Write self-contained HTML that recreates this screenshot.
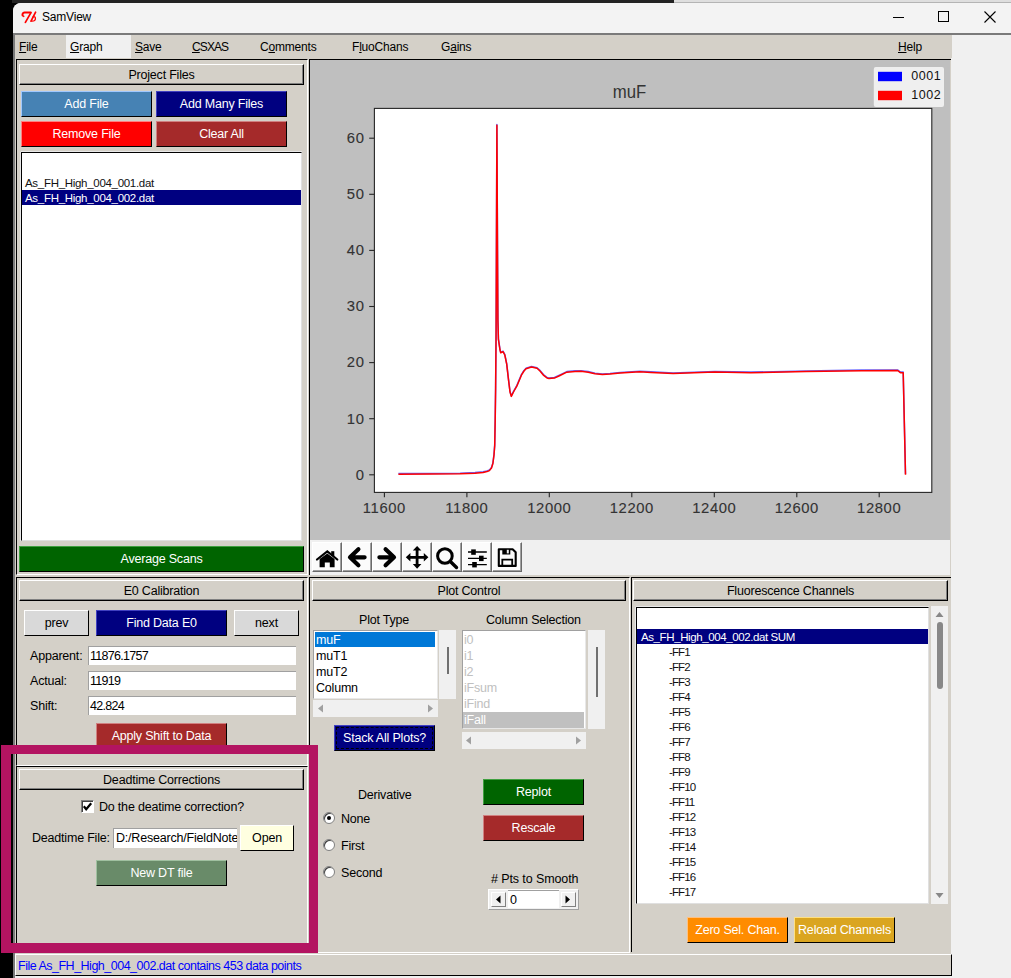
<!DOCTYPE html>
<html><head><meta charset="utf-8">
<style>
*{box-sizing:border-box;margin:0;padding:0}
html,body{width:1011px;height:978px;overflow:hidden;background:#000}
body{position:relative;font-family:"Liberation Sans",sans-serif;font-size:12px;color:#000}
.a{position:absolute}
.t{position:absolute;white-space:nowrap;line-height:1;letter-spacing:-0.2px}
.hdr{position:absolute;background:#d4d0c8;border-top:1px solid #fff;border-left:1px solid #fff;border-right:1px solid #000;border-bottom:1px solid #000;box-shadow:inset -1px -1px 0 #808080;text-align:center;font-size:12.5px;letter-spacing:-0.2px;padding-top:1px}
.btn{position:absolute;text-align:center;color:#fff;font-size:12.5px;letter-spacing:-0.2px;white-space:nowrap;border-right:1px solid #000;border-bottom:1px solid #000}
.ent{position:absolute;background:#fff;border-top:1px solid #a0a0a0;border-left:1px solid #a0a0a0}
.ul{text-decoration:underline}
</style></head><body>
<!-- top dark strip -->
<div class="a" style="left:12px;top:0;width:999px;height:3px;background:#dedede"></div><div class="a" style="left:12px;top:0;width:662px;height:3px;background:#222"></div><div class="a" style="left:674px;top:2px;width:337px;height:1px;background:#b4b4b4"></div>
<!-- window -->
<div class="a" id="win" style="left:13px;top:3px;width:998px;height:975px;background:#f0f0f0;border-radius:8px 0 0 0;overflow:hidden">
</div>
<!-- title bar -->
<div class="a" style="left:13px;top:3px;width:998px;height:30px;background:#f3f3f3;border-radius:8px 0 0 0"></div>
<div class="t" style="left:42px;top:11px;font-size:12px;color:#000">SamView</div>
<svg class="a" style="left:0;top:0" width="40" height="30" viewBox="0 0 40 30">
 <g fill="none" stroke="#f00" stroke-linecap="round">
  <path d="M22.6 15.5 Q22 13 24.5 12.6 L30.8 12.6" stroke-width="2"/>
  <path d="M23.5 16.2 L23.8 16.4" stroke-width="1.4"/>
  <path d="M30.8 12.8 L25.4 22.4" stroke-width="1.7"/>
  <path d="M35.6 12.2 L31 21.2" stroke-width="1.7"/>
  <path d="M33.2 16.6 Q35.6 16.4 35.4 18.6 Q35.5 21.2 32 21.2" stroke-width="1.3"/>
 </g>
</svg>
<!-- window controls -->
<div class="a" style="left:893px;top:17px;width:11px;height:1px;background:#000"></div>
<div class="a" style="left:938px;top:11px;width:11px;height:11px;border:1px solid #000"></div>
<svg class="a" style="left:984px;top:11px" width="12" height="12"><path d="M0.5 0.5 L11.5 11.5 M11.5 0.5 L0.5 11.5" stroke="#000" stroke-width="1.1"/></svg>
<!-- window border line -->
<div class="a" style="left:13px;top:33px;width:998px;height:2px;background:#7a7a7a"></div>
<div class="a" style="left:13px;top:33px;width:2px;height:945px;background:#7a7a7a"></div>
<!-- menubar -->
<div class="a" style="left:15px;top:35px;width:937px;height:23px;background:#d4d0c8"></div>
<div class="a" style="left:66px;top:35px;width:65px;height:23px;background:#f0f0f0"></div>
<div class="t" style="left:19px;top:41px"><span class="ul">F</span>ile</div>
<div class="t" style="left:70px;top:41px"><span class="ul">G</span>raph</div>
<div class="t" style="left:135px;top:41px"><span class="ul">S</span>ave</div>
<div class="t" style="left:192px;top:41px;letter-spacing:-0.9px"><span class="ul">C</span>SXAS</div>
<div class="t" style="left:260px;top:41px">C<span class="ul">o</span>mments</div>
<div class="t" style="left:352px;top:41px">F<span class="ul">l</span>uoChans</div>
<div class="t" style="left:441px;top:41px">G<span class="ul">a</span>ins</div>
<div class="t" style="left:898px;top:41px"><span class="ul">H</span>elp</div>
<!-- main bg -->
<div class="a" style="left:15px;top:58px;width:936px;height:920px;background:#d4d0c8"></div>

<!-- ===== Project Files frame ===== -->
<div class="a" style="left:16px;top:59px;width:292px;height:516px;border-top:1px solid #000;border-left:1px solid #000;border-right:1px solid #fff;border-bottom:1px solid #fff"></div>
<div class="hdr" style="left:19px;top:64px;width:285px;height:21px;line-height:19px">Project Files</div>
<div class="btn" style="left:21px;top:91px;width:131px;height:26px;line-height:25px;background:#4682b4;border-top:1px solid #a0c8ff;border-left:1px solid #a0c8ff">Add File</div>
<div class="btn" style="left:156px;top:91px;width:131px;height:26px;line-height:25px;background:#000080;border-top:1px solid #4040c0;border-left:1px solid #4040c0">Add Many Files</div>
<div class="btn" style="left:21px;top:121px;width:131px;height:26px;line-height:25px;background:#f00;border-top:1px solid #ff8080;border-left:1px solid #ff8080">Remove File</div>
<div class="btn" style="left:156px;top:121px;width:131px;height:26px;line-height:25px;background:#a52a2a;border-top:1px solid #d08080;border-left:1px solid #d08080">Clear All</div>
<div class="a" style="left:21px;top:152px;width:281px;height:389px;background:#fff;border-top:1px solid #000;border-left:1px solid #000;box-shadow:0 -1px 0 #e8e8e8, -1px 0 0 #e8e8e8;border-right:1px solid #e0e0e0;border-bottom:1px solid #e0e0e0"></div>
<div class="t" style="left:25px;top:177.5px;font-size:11.5px;letter-spacing:-0.3px;color:#111">As_FH_High_004_001.dat</div>
<div class="a" style="left:22px;top:190px;width:279px;height:15px;background:#000080"></div>
<div class="t" style="left:25px;top:192.5px;font-size:11.5px;letter-spacing:-0.3px;color:#fff">As_FH_High_004_002.dat</div>
<div class="btn" style="left:19px;top:546px;width:285px;height:26px;line-height:25px;background:#006400;border-top:1px solid #40a040;border-left:1px solid #40a040">Average Scans</div>

<!-- ===== Plot frame ===== -->
<div class="a" style="left:309px;top:59px;width:642px;height:516px;border-top:1px solid #000;border-left:1px solid #000"></div>
<div class="a" style="left:310px;top:60px;width:640px;height:480px;background:#bfbfbf"></div>
<div class="a" style="left:310px;top:540px;width:640px;height:35px;background:#f0f0f0"></div>

<svg class="a" style="left:310px;top:60px" width="640" height="480" viewBox="310 60 640 480">
 <rect x="374.4" y="108.4" width="557.4" height="384" fill="#fff" stroke="#262626" stroke-width="1.1"/>
 <g stroke="#262626" stroke-width="1.1"><path d="M369.2 474.8 H374.4" /><path d="M369.2 418.7 H374.4" /><path d="M369.2 362.6 H374.4" /><path d="M369.2 306.5 H374.4" /><path d="M369.2 250.4 H374.4" /><path d="M369.2 194.3 H374.4" /><path d="M369.2 138.2 H374.4" /><path d="M384.4 492.4 V497.2" /><path d="M466.9 492.4 V497.2" /><path d="M549.3 492.4 V497.2" /><path d="M631.8 492.4 V497.2" /><path d="M714.3 492.4 V497.2" /><path d="M796.8 492.4 V497.2" /><path d="M879.2 492.4 V497.2" /></g>
 <g fill="#333" stroke="#333" stroke-width="0.12" font-family="Liberation Sans" font-size="14.8px" letter-spacing="0.6"><text x="364.5" y="479.6" text-anchor="end">0</text><text x="364.5" y="423.5" text-anchor="end">10</text><text x="364.5" y="367.4" text-anchor="end">20</text><text x="364.5" y="311.3" text-anchor="end">30</text><text x="364.5" y="255.2" text-anchor="end">40</text><text x="364.5" y="199.1" text-anchor="end">50</text><text x="364.5" y="143.0" text-anchor="end">60</text><text x="384.4" y="513.3" text-anchor="middle">11600</text><text x="466.9" y="513.3" text-anchor="middle">11800</text><text x="549.3" y="513.3" text-anchor="middle">12000</text><text x="631.8" y="513.3" text-anchor="middle">12200</text><text x="714.3" y="513.3" text-anchor="middle">12400</text><text x="796.8" y="513.3" text-anchor="middle">12600</text><text x="879.2" y="513.3" text-anchor="middle">12800</text></g>
 <text x="629.6" y="98.2" text-anchor="middle" fill="#333" font-family="Liberation Sans" font-size="18px" textLength="33.5" lengthAdjust="spacingAndGlyphs">muF</text>
 <path d="M398.4 474.2 L430.0 474.0 L460.0 473.8 L475.0 473.2 L483.1 472.4 L487.0 471.6 L489.4 470.6 L491.5 468.0 L492.9 463.5 L494.0 455.0 L494.7 445.7 L495.2 420.0 L495.6 390.0 L496.1 330.0 L496.9 125.2 L497.5 250.0 L497.9 320.0 L498.4 339.3 L500.0 350.0 L500.7 352.7 L503.0 351.7 L504.8 355.0 L506.7 364.2 L508.5 379.8 L510.0 392.0 L511.3 396.4 L513.5 392.0 L516.8 386.2 L521.4 375.2 L524.0 371.0 L526.0 368.8 L531.5 367.0 L537.0 368.3 L540.0 371.0 L543.7 375.4 L547.0 378.0 L549.0 378.6 L554.4 378.1 L560.0 375.5 L566.8 372.2 L575.0 371.4 L581.0 371.3 L588.2 372.2 L595.0 373.8 L602.4 374.5 L610.0 374.0 L620.2 373.1 L639.8 371.8 L651.0 372.4 L673.2 373.5 L714.8 372.1 L750.8 372.7 L806.2 371.6 L861.6 370.7 L897.6 370.5 L900.4 372.7 L903.2 372.7 L905.5 474.7" fill="none" stroke="#4040ff" stroke-width="1.5" stroke-linejoin="round" transform="translate(0,-0.6)" opacity="0.8"/>
 <path d="M398.4 474.2 L430.0 474.0 L460.0 473.8 L475.0 473.2 L483.1 472.4 L487.0 471.6 L489.4 470.6 L491.5 468.0 L492.9 463.5 L494.0 455.0 L494.7 445.7 L495.2 420.0 L495.6 390.0 L496.1 330.0 L496.9 125.2 L497.5 250.0 L497.9 320.0 L498.4 339.3 L500.0 350.0 L500.7 352.7 L503.0 351.7 L504.8 355.0 L506.7 364.2 L508.5 379.8 L510.0 392.0 L511.3 396.4 L513.5 392.0 L516.8 386.2 L521.4 375.2 L524.0 371.0 L526.0 368.8 L531.5 367.0 L537.0 368.3 L540.0 371.0 L543.7 375.4 L547.0 378.0 L549.0 378.6 L554.4 378.1 L560.0 375.5 L566.8 372.2 L575.0 371.4 L581.0 371.3 L588.2 372.2 L595.0 373.8 L602.4 374.5 L610.0 374.0 L620.2 373.1 L639.8 371.8 L651.0 372.4 L673.2 373.5 L714.8 372.1 L750.8 372.7 L806.2 371.6 L861.6 370.7 L897.6 370.5 L900.4 372.7 L903.2 372.7 L905.5 474.7" fill="none" stroke="#f00" stroke-width="1.5" stroke-linejoin="round"/>
 <rect x="873.8" y="66.9" width="70.2" height="40.1" rx="2" fill="#efefef"/>
 <rect x="878" y="71.8" width="24" height="9.4" fill="#0000ff"/>
 <rect x="878" y="90.8" width="24" height="9.4" fill="#ff0000"/>
 <text x="911.3" y="80" fill="#111" font-family="Liberation Sans" font-size="12.5px" letter-spacing="0.5">0001</text>
 <text x="911.3" y="99" fill="#111" font-family="Liberation Sans" font-size="12.5px" letter-spacing="0.5">1002</text>
</svg>
<div class="a" style="left:312px;top:542px;width:30px;height:30px;background:#fbfbfb;border-top:1px solid #fff;border-left:1px solid #fff;border-right:1px solid #6a6a6a;border-bottom:1px solid #6a6a6a;box-shadow:inset -1px -1px 0 #a0a0a0"></div><div class="a" style="left:342px;top:542px;width:30px;height:30px;background:#fbfbfb;border-top:1px solid #fff;border-left:1px solid #fff;border-right:1px solid #6a6a6a;border-bottom:1px solid #6a6a6a;box-shadow:inset -1px -1px 0 #a0a0a0"></div><div class="a" style="left:372px;top:542px;width:30px;height:30px;background:#fbfbfb;border-top:1px solid #fff;border-left:1px solid #fff;border-right:1px solid #6a6a6a;border-bottom:1px solid #6a6a6a;box-shadow:inset -1px -1px 0 #a0a0a0"></div><div class="a" style="left:402px;top:542px;width:30px;height:30px;background:#fbfbfb;border-top:1px solid #fff;border-left:1px solid #fff;border-right:1px solid #6a6a6a;border-bottom:1px solid #6a6a6a;box-shadow:inset -1px -1px 0 #a0a0a0"></div><div class="a" style="left:432px;top:542px;width:30px;height:30px;background:#fbfbfb;border-top:1px solid #fff;border-left:1px solid #fff;border-right:1px solid #6a6a6a;border-bottom:1px solid #6a6a6a;box-shadow:inset -1px -1px 0 #a0a0a0"></div><div class="a" style="left:462px;top:542px;width:30px;height:30px;background:#fbfbfb;border-top:1px solid #fff;border-left:1px solid #fff;border-right:1px solid #6a6a6a;border-bottom:1px solid #6a6a6a;box-shadow:inset -1px -1px 0 #a0a0a0"></div><div class="a" style="left:492px;top:542px;width:30px;height:30px;background:#fbfbfb;border-top:1px solid #fff;border-left:1px solid #fff;border-right:1px solid #6a6a6a;border-bottom:1px solid #6a6a6a;box-shadow:inset -1px -1px 0 #a0a0a0"></div>
<svg class="a" style="left:310px;top:540px" width="215" height="35" viewBox="310 540 215 35">
 <g fill="#000" stroke="#000">
  <path d="M317 559.5 L327.3 551.4 L337.3 559.5" fill="none" stroke-width="2.2" stroke-linecap="round" stroke-linejoin="miter"/>
  <path d="M331.2 551.2 H334.3 V556 H331.2Z" stroke="none"/>
  <path d="M319.6 559 L327.3 553.4 L334.6 559 V567.3 H329.8 V562.4 H324.8 V567.3 H319.6Z" stroke="none"/>
  <path d="M358.4 549.3 L350 557.3 L358.4 565.3 M350.5 557.3 H364.6" fill="none" stroke-width="4.2" stroke-linecap="round" stroke-linejoin="round"/>
  <path d="M385.6 549.3 L394 557.3 L385.6 565.3 M393.5 557.3 H379.4" fill="none" stroke-width="4.2" stroke-linecap="round" stroke-linejoin="round"/>
  <path d="M417.1 549 V565.7 M409.5 557.3 H424.7" fill="none" stroke-width="2.8"/>
  <path d="M417.1 546 L421.4 550.6 H412.8Z M417.1 568.7 L421.4 564 H412.8Z M405.8 557.3 L410.4 553 V561.6Z M428.4 557.3 L423.8 553 V561.6Z" stroke="none"/>
  <circle cx="444.9" cy="556" r="7.3" fill="none" stroke-width="3"/>
  <path d="M450.6 561.8 L456.5 567.5" fill="none" stroke-width="3.4" stroke-linecap="round"/>
  <path d="M468 552 H486.8 M468 558.3 H486.8 M468 564.6 H486.8" fill="none" stroke-width="1.3"/>
  <rect x="471.2" y="549.4" width="4.6" height="5.4" stroke="none"/>
  <rect x="479" y="555.7" width="4.6" height="5.4" stroke="none"/>
  <rect x="472.2" y="562" width="4.6" height="5.4" stroke="none"/>
  <path d="M498.8 549.2 H512.6 L515.7 552.3 V565.9 H498.8Z" fill="none" stroke-width="2.1" stroke-linejoin="round"/>
  <rect x="502.3" y="549" width="8" height="5.5" stroke="none"/>
  <rect x="506.8" y="549.8" width="2" height="3.6" fill="#f0f0f0" stroke="none"/>
  <path d="M502.3 566 V559.6 H512.2 V566" fill="none" stroke-width="1.8"/>
 </g>
</svg>

<!-- ===== E0 Calibration frame ===== -->
<div class="a" style="left:16px;top:577px;width:292px;height:189px;border-top:1px solid #000;border-left:1px solid #000;border-right:1px solid #fff;border-bottom:1px solid #fff"></div>
<div class="hdr" style="left:19px;top:580px;width:285px;height:21px;line-height:19px">E0 Calibration</div>
<div class="btn" style="left:24px;top:610px;width:65px;height:26px;line-height:24px;color:#000;background:#d9d9d9;border-top:1px solid #fff;border-left:1px solid #fff">prev</div>
<div class="btn" style="left:96px;top:610px;width:131px;height:26px;line-height:24px;background:#000080;border-top:1px solid #4040c0;border-left:1px solid #4040c0">Find Data E0</div>
<div class="btn" style="left:234px;top:610px;width:65px;height:26px;line-height:24px;color:#000;background:#d9d9d9;border-top:1px solid #fff;border-left:1px solid #fff">next</div>
<div class="t" style="left:30px;top:650px;font-size:12.5px">Apparent:</div>
<div class="t" style="left:30px;top:675px;font-size:12.5px">Actual:</div>
<div class="t" style="left:30px;top:700px;font-size:12.5px">Shift:</div>
<div class="ent" style="left:88px;top:646px;width:208px;height:19px"></div>
<div class="ent" style="left:88px;top:671px;width:208px;height:19px"></div>
<div class="ent" style="left:88px;top:696px;width:208px;height:19px"></div>
<div class="t" style="left:90px;top:650px;font-size:12.5px;letter-spacing:-0.7px">11876.1757</div>
<div class="t" style="left:90px;top:675px;font-size:12.5px;letter-spacing:-0.7px">11919</div>
<div class="t" style="left:90px;top:700px;font-size:12.5px;letter-spacing:-0.7px">42.824</div>
<div class="btn" style="left:96px;top:723px;width:131px;height:26px;line-height:24px;background:#a52a2a;border-top:1px solid #d08080;border-left:1px solid #d08080">Apply Shift to Data</div>

<!-- ===== Deadtime frame ===== -->
<div class="a" style="left:16px;top:766px;width:292px;height:186px;border-top:1px solid #000;border-left:1px solid #000;border-right:1px solid #fff;border-bottom:1px solid #fff"></div>
<div class="hdr" style="left:19px;top:769px;width:285px;height:21px;line-height:19px">Deadtime Corrections</div>
<div class="a" style="left:81px;top:800px;width:13px;height:13px;background:#fff;border-top:1px solid #808080;border-left:1px solid #808080;border-right:1px solid #fff;border-bottom:1px solid #fff;box-shadow:inset 1px 1px 0 #404040"></div>
<svg class="a" style="left:81px;top:800px" width="13" height="13"><path d="M2.8 6.2 L5.2 9.2 L10.2 3.2" stroke="#000" stroke-width="2.2" fill="none"/></svg>
<div class="t" style="left:99px;top:801px;font-size:12.5px">Do the deatime correction?</div>
<div class="t" style="left:32px;top:832px;font-size:12.5px">Deadtime File:</div>
<div class="ent" style="left:113px;top:828px;width:124px;height:20px;overflow:hidden"><div class="t" style="left:2px;top:3px;font-size:12.5px">D:/Research/FieldNotes/</div></div>
<div class="btn" style="left:240px;top:825px;width:54px;height:26px;line-height:24px;color:#000;background:#ffffe0;border-top:1px solid #fff;border-left:1px solid #fff">Open</div>
<div class="btn" style="left:96px;top:860px;width:131px;height:26px;line-height:24px;background:#698b69;border-top:1px solid #a0c0a0;border-left:1px solid #a0c0a0">New DT file</div>

<!-- ===== Plot Control frame ===== -->
<div class="a" style="left:309px;top:577px;width:321px;height:376px;border-top:1px solid #000;border-left:1px solid #000;border-right:1px solid #fff;border-bottom:1px solid #fff"></div>
<div class="hdr" style="left:312px;top:580px;width:314px;height:21px;line-height:19px">Plot Control</div>
<div class="t" style="left:359px;top:614px;font-size:12.5px">Plot Type</div>
<div class="t" style="left:486px;top:614px;font-size:12.5px">Column Selection</div>
<!-- plot type listbox -->
<div class="a" style="left:313px;top:630px;width:125px;height:69px;background:#fff;border-top:1px solid #a0a0a0;border-left:1px solid #a0a0a0;border-right:1px solid #e8e8e8;border-bottom:1px solid #e8e8e8"></div>
<div class="a" style="left:315px;top:632px;width:120px;height:15px;background:#0078d7"></div>
<div class="t" style="left:316px;top:634px;font-size:12.5px;color:#fff">muF</div>
<div class="t" style="left:316px;top:650px;font-size:12.5px">muT1</div>
<div class="t" style="left:316px;top:666px;font-size:12.5px">muT2</div>
<div class="t" style="left:316px;top:682px;font-size:12.5px">Column</div>
<div class="a" style="left:439px;top:630px;width:17px;height:69px;background:#f0f0f0"></div>
<div class="a" style="left:447px;top:647px;width:2px;height:27px;background:#707070"></div>
<div class="a" style="left:313px;top:700px;width:125px;height:17px;background:#f0f0f0"></div>
<svg class="a" style="left:313px;top:700px" width="125" height="17"><path d="M5 8.5 L10 4.5 V12.5Z M120 8.5 L115 4.5 V12.5Z" fill="#a0a0a0"/></svg>
<!-- column selection listbox -->
<div class="a" style="left:462px;top:630px;width:124px;height:99px;background:#fff;border-top:1px solid #a0a0a0;border-left:1px solid #a0a0a0;border-right:1px solid #e8e8e8;border-bottom:1px solid #e8e8e8"></div>
<div class="t" style="left:464px;top:634px;font-size:12.5px;color:#c0c0c0">i0</div>
<div class="t" style="left:464px;top:650px;font-size:12.5px;color:#c0c0c0">i1</div>
<div class="t" style="left:464px;top:666px;font-size:12.5px;color:#c0c0c0">i2</div>
<div class="t" style="left:464px;top:682px;font-size:12.5px;color:#c0c0c0">iFsum</div>
<div class="t" style="left:464px;top:698px;font-size:12.5px;color:#c0c0c0">iFind</div>
<div class="a" style="left:463px;top:712px;width:121px;height:16px;background:#c0c0c0"></div>
<div class="t" style="left:464px;top:714px;font-size:12.5px;color:#fff">iFall</div>
<div class="a" style="left:588px;top:630px;width:17px;height:99px;background:#f0f0f0"></div>
<div class="a" style="left:596px;top:647px;width:2px;height:50px;background:#707070"></div>
<div class="a" style="left:462px;top:732px;width:124px;height:17px;background:#f0f0f0"></div>
<svg class="a" style="left:462px;top:732px" width="124" height="17"><path d="M4 8.5 L9 4.5 V12.5Z M119 8.5 L114 4.5 V12.5Z" fill="#a0a0a0"/></svg>
<div class="btn" style="left:334px;top:725px;width:101px;height:26px;line-height:24px;background:#000080;border-top:1px solid #4040c0;border-left:1px solid #4040c0;outline:1px dashed #000;outline-offset:-3px">Stack All Plots?</div>
<div class="t" style="left:358px;top:789px;font-size:12.5px">Derivative</div>
<div class="a" style="left:323px;top:812px;width:12px;height:12px;border-radius:50%;background:#fff;border:1px solid #808080;box-shadow:inset 1px 1px 0 #404040"></div>
<div class="a" style="left:327px;top:816px;width:4px;height:4px;border-radius:50%;background:#000"></div>
<div class="a" style="left:323px;top:839px;width:12px;height:12px;border-radius:50%;background:#fff;border:1px solid #808080;box-shadow:inset 1px 1px 0 #404040"></div>
<div class="a" style="left:323px;top:866px;width:12px;height:12px;border-radius:50%;background:#fff;border:1px solid #808080;box-shadow:inset 1px 1px 0 #404040"></div>
<div class="t" style="left:341px;top:813px;font-size:12.5px">None</div>
<div class="t" style="left:341px;top:840px;font-size:12.5px">First</div>
<div class="t" style="left:341px;top:867px;font-size:12.5px">Second</div>
<div class="btn" style="left:483px;top:779px;width:101px;height:26px;line-height:24px;background:#006400;border-top:1px solid #40a040;border-left:1px solid #40a040">Replot</div>
<div class="btn" style="left:483px;top:815px;width:101px;height:26px;line-height:24px;background:#a52a2a;border-top:1px solid #d08080;border-left:1px solid #d08080">Rescale</div>
<div class="t" style="left:491px;top:873px;font-size:12.5px;letter-spacing:-0.1px"># Pts to Smooth</div>
<div class="a" style="left:488px;top:889px;width:91px;height:21px;background:#f0f0f0;border-top:1px solid #fff;border-left:1px solid #fff;border-right:1px solid #a0a0a0;border-bottom:1px solid #a0a0a0"></div>
<div class="a" style="left:508px;top:890px;width:51px;height:18px;background:#fff;border-top:1px solid #a0a0a0"></div>
<div class="a" style="left:491px;top:892px;width:15px;height:15px;background:#f0f0f0;border-top:1px solid #fff;border-left:1px solid #fff;border-right:1px solid #808080;border-bottom:1px solid #808080"></div>
<div class="a" style="left:561px;top:892px;width:15px;height:15px;background:#f0f0f0;border-top:1px solid #fff;border-left:1px solid #fff;border-right:1px solid #808080;border-bottom:1px solid #808080"></div>
<svg class="a" style="left:488px;top:889px" width="91" height="21"><path d="M8 10.5 L12.5 6.5 V14.5Z M82 10.5 L77.5 6.5 V14.5Z" fill="#000"/></svg>
<div class="t" style="left:510px;top:894px;font-size:12.5px">0</div>

<!-- ===== Fluorescence Channels frame ===== -->
<div class="a" style="left:631px;top:577px;width:320px;height:375px;border-top:1px solid #000;border-left:1px solid #000"></div>
<div class="hdr" style="left:633px;top:580px;width:315px;height:21px;line-height:19px">Fluorescence Channels</div>
<div class="a" style="left:636px;top:607px;width:293px;height:297px;background:#fff;border-top:1px solid #000;border-left:1px solid #000;box-shadow:0 -1px 0 #e8e8e8, -1px 0 0 #e8e8e8;border-right:1px solid #e0e0e0;border-bottom:1px solid #e0e0e0"></div>
<div class="a" style="left:637px;top:629px;width:291px;height:15px;background:#000080"></div>
<div class="t" style="left:641px;top:632px;font-size:11.5px;letter-spacing:-0.4px;color:#fff">As_FH_High_004_002.dat SUM</div>
<div class="a" style="left:931px;top:606px;width:17px;height:298px;background:#f0f0f0"></div>
<div class="a" style="left:937px;top:622px;width:6px;height:67px;background:#888;border-radius:3px"></div>
<svg class="a" style="left:931px;top:606px" width="17" height="298"><path d="M4.5 11 L8.5 6 L12.5 11Z M4.5 287 L8.5 292 L12.5 287Z" fill="#888"/></svg>
<div class="t" style="left:669px;top:646.5px;font-size:11.5px;letter-spacing:-0.9px;color:#111">-FF1</div>
<div class="t" style="left:669px;top:661.5px;font-size:11.5px;letter-spacing:-0.9px;color:#111">-FF2</div>
<div class="t" style="left:669px;top:676.5px;font-size:11.5px;letter-spacing:-0.9px;color:#111">-FF3</div>
<div class="t" style="left:669px;top:691.5px;font-size:11.5px;letter-spacing:-0.9px;color:#111">-FF4</div>
<div class="t" style="left:669px;top:706.5px;font-size:11.5px;letter-spacing:-0.9px;color:#111">-FF5</div>
<div class="t" style="left:669px;top:721.5px;font-size:11.5px;letter-spacing:-0.9px;color:#111">-FF6</div>
<div class="t" style="left:669px;top:736.5px;font-size:11.5px;letter-spacing:-0.9px;color:#111">-FF7</div>
<div class="t" style="left:669px;top:751.5px;font-size:11.5px;letter-spacing:-0.9px;color:#111">-FF8</div>
<div class="t" style="left:669px;top:766.5px;font-size:11.5px;letter-spacing:-0.9px;color:#111">-FF9</div>
<div class="t" style="left:669px;top:781.5px;font-size:11.5px;letter-spacing:-0.9px;color:#111">-FF10</div>
<div class="t" style="left:669px;top:796.5px;font-size:11.5px;letter-spacing:-0.9px;color:#111">-FF11</div>
<div class="t" style="left:669px;top:811.5px;font-size:11.5px;letter-spacing:-0.9px;color:#111">-FF12</div>
<div class="t" style="left:669px;top:826.5px;font-size:11.5px;letter-spacing:-0.9px;color:#111">-FF13</div>
<div class="t" style="left:669px;top:841.5px;font-size:11.5px;letter-spacing:-0.9px;color:#111">-FF14</div>
<div class="t" style="left:669px;top:856.5px;font-size:11.5px;letter-spacing:-0.9px;color:#111">-FF15</div>
<div class="t" style="left:669px;top:871.5px;font-size:11.5px;letter-spacing:-0.9px;color:#111">-FF16</div>
<div class="t" style="left:669px;top:886.5px;font-size:11.5px;letter-spacing:-0.9px;color:#111">-FF17</div>
<div class="btn" style="left:687px;top:917px;width:101px;height:26px;line-height:24px;background:#ff8c00;border-top:1px solid #ffc080;border-left:1px solid #ffc080">Zero Sel. Chan.</div>
<div class="btn" style="left:794px;top:917px;width:101px;height:26px;line-height:24px;background:#daa520;border-top:1px solid #ffe080;border-left:1px solid #ffe080">Reload Channels</div>

<!-- status bar -->
<div class="a" style="left:15px;top:954px;width:937px;height:22px;background:#d4d0c8;border-top:1px solid #fff;border-left:1px solid #fff;border-right:1px solid #000;border-bottom:1px solid #000"></div><div class="a" style="left:15px;top:976px;width:937px;height:2px;background:#f0f0f0"></div>
<div class="t" style="left:18px;top:960px;font-size:12.5px;letter-spacing:-0.5px;color:#0000ff">File As_FH_High_004_002.dat contains 453 data points</div>

<!-- magenta highlight -->
<div class="a" style="left:1px;top:745px;width:317px;height:208px;border:solid #b31461;border-width:9px 9px 10px 10px"></div>
</body></html>
